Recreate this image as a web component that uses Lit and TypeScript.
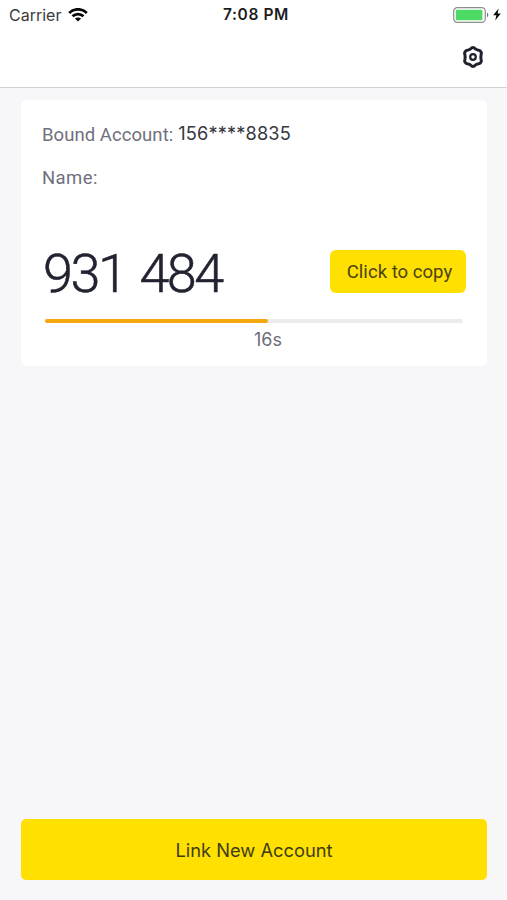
import { LitElement, html, css } from "lit";
import { customElement, state } from "lit/decorators.js";

@customElement("status-bar")
class StatusBar extends LitElement {
  static styles = css`
    :host {
      display: grid;
      grid-template-columns: 1fr auto 1fr;
      height: 30px;
      align-items: center;
      padding: 0 6px 0 9px;
      font-size: 16px;
      color: #3b3b3b;
    }
    .left { display: flex; align-items: center; gap: 7px; }
    .carrier { font-size: 16px; }
    .time { margin-left: 2px; font-weight: 600; letter-spacing: 0.6px; font-size: 15.5px; line-height: 30px; color: #1c1c1c; }
    .right { display: flex; align-items: center; justify-content: flex-end; gap: 4px; margin-top: -1px; }
    svg { display: block; }
  `;
  render() {
    return html`
      <div class="left">
        <span class="carrier">Carrier</span>
        <svg width="20" height="15" viewBox="0 0 20 15" fill="none" stroke="#080808" stroke-width="2.8">
          <path d="M1.2 4.9C6.2 0.1 13.8 0.1 18.8 4.9" />
          <path d="M4.5 8.3C7.7 5.3 12.3 5.3 15.5 8.3" />
          <path d="M10 13.5L6.9 10.6C8.7 9.1 11.3 9.1 13.1 10.6Z" fill="#080808" stroke="none" />
        </svg>
      </div>
      <span class="time">7:08 PM</span>
      <div class="right">
        <svg width="36" height="16" viewBox="0 0 36 16">
          <rect x="0.7" y="0.7" width="31.6" height="14.6" rx="3.6" fill="#fff" stroke="#8d8d8d" stroke-width="1.2" />
          <rect x="2.8" y="2.8" width="26.6" height="10.4" rx="1" fill="#4cd964" />
          <path d="M34 5.6C35.8 6.4 35.8 9.6 34 10.4Z" fill="#777" />
        </svg>
        <svg width="8" height="13" viewBox="0 0 8 13">
          <path d="M5.6 0.4L0.2 7.3H3.4L2.2 12.6L7.8 5.4H4.6Z" fill="#080808" />
        </svg>
      </div>
    `;
  }
}

@customElement("token-card")
class TokenCard extends LitElement {
  @state() account = "156****8835";
  @state() code = "931 484";
  @state() seconds = 16;

  static styles = css`
    :host {
      display: block;
      box-sizing: border-box;
      height: 265.5px;
      padding: 22px 21px 0;
      border-radius: 6px;
      background: #fff;
    }
    .row { display: flex; align-items: center; height: 24px; }
    .row + .row { margin-top: 19px; }
    .label { padding-top: 1px; font: 18.5px/24px Roboto, sans-serif; color: #70707c; letter-spacing: 0.06px; }
    .name { letter-spacing: 0.4px; }
    .value { margin-left: 5px; margin-top: -3px; font-size: 18.2px; letter-spacing: 0.15px; line-height: 24px; color: #38383f; white-space: nowrap; }
    .code-row { display: flex; align-items: center; justify-content: space-between; height: 60px; margin-top: 54px; }
    .code {
      padding: 1px 0 0 1px;
      font: 300 54px/60px Roboto, sans-serif;
      letter-spacing: -2.5px; word-spacing: 3.4px;
      color: #222331; -webkit-text-stroke: 0.5px #222331; white-space: nowrap;
    }
    .copy {
      width: 136px; height: 43px; margin-top: -4px; padding: 2px 0 0 3px;
      border: 0; border-radius: 6px;
      background: #ffe000; color: #4a4413;
      font: 18.5px Roboto, sans-serif; letter-spacing: 0.04px; white-space: nowrap;
    }
    .track { height: 4px; margin: 16px 3px 0; border-radius: 2px; background: #ececee; }
    .fill { height: 4px; border-radius: 2px; background: #f5a70f; }
    .seconds { margin-top: 5px; padding-left: 28px; text-align: center; font-size: 18px; line-height: 24px; color: #6c6c78; }
  `;
  render() {
    return html`
      <div class="row"><span class="label">Bound Account:</span><span class="value">${this.account}</span></div>
      <div class="row"><span class="label name">Name:</span></div>
      <div class="code-row">
        <span class="code">${this.code}</span>
        <button class="copy">Click to copy</button>
      </div>
      <div class="track"><div class="fill" style="width:${(this.seconds / 30) * 100}%"></div></div>
      <div class="seconds">${this.seconds}s</div>
    `;
  }
}

@customElement("app-root")
class AppRoot extends LitElement {
  static styles = css`
    :host {
      display: flex;
      flex-direction: column;
      box-sizing: border-box;
      height: 900px;
      background: #f7f7fa;
      font-family: Inter, sans-serif;
    }
    header { box-sizing: border-box; height: 88px; background: #fff; border-bottom: 1px solid #d2d2d5; }
    .nav { display: flex; justify-content: flex-end; padding: 15px 23px 0 0; }
    .nav svg { display: block; }
    main { flex: 1; display: flex; flex-direction: column; justify-content: space-between; padding: 12px 20px 20px 21px; }
    .link {
      height: 61px; padding: 0; border: 0; border-radius: 5px;
      background: #ffe000; color: #403c18;
      font: 18.3px Inter, sans-serif;
    }
  `;
  render() {
    return html`
      <header>
        <status-bar></status-bar>
        <div class="nav">
          <svg width="22" height="24" viewBox="0 0 22 24" fill="none" stroke="#20212f">
            <path d="M11 2.6Q12.3 2.6 13.3 3.9Q14.3 4.7 15.8 4.9Q18 5.1 18.9 6.7Q19.8 8 19.1 9.5Q18.6 12 19.1 14.5Q19.8 16 18.9 17.3Q18 18.9 15.8 19.1Q14.3 19.3 13.3 20.1Q12.3 21.4 11 21.4Q9.7 21.4 8.7 20.1Q7.7 19.3 6.2 19.1Q4 18.9 3.1 17.3Q2.2 16 2.9 14.5Q3.4 12 2.9 9.5Q2.2 8 3.1 6.7Q4 5.1 6.2 4.9Q7.7 4.7 8.7 3.9Q9.7 2.6 11 2.6Z" stroke-width="3" stroke-linejoin="round" />
            <circle cx="11" cy="12" r="2.8" stroke-width="2.2" />
          </svg>
        </div>
      </header>
      <main>
        <token-card></token-card>
        <button class="link">Link New Account</button>
      </main>
    `;
  }
}
